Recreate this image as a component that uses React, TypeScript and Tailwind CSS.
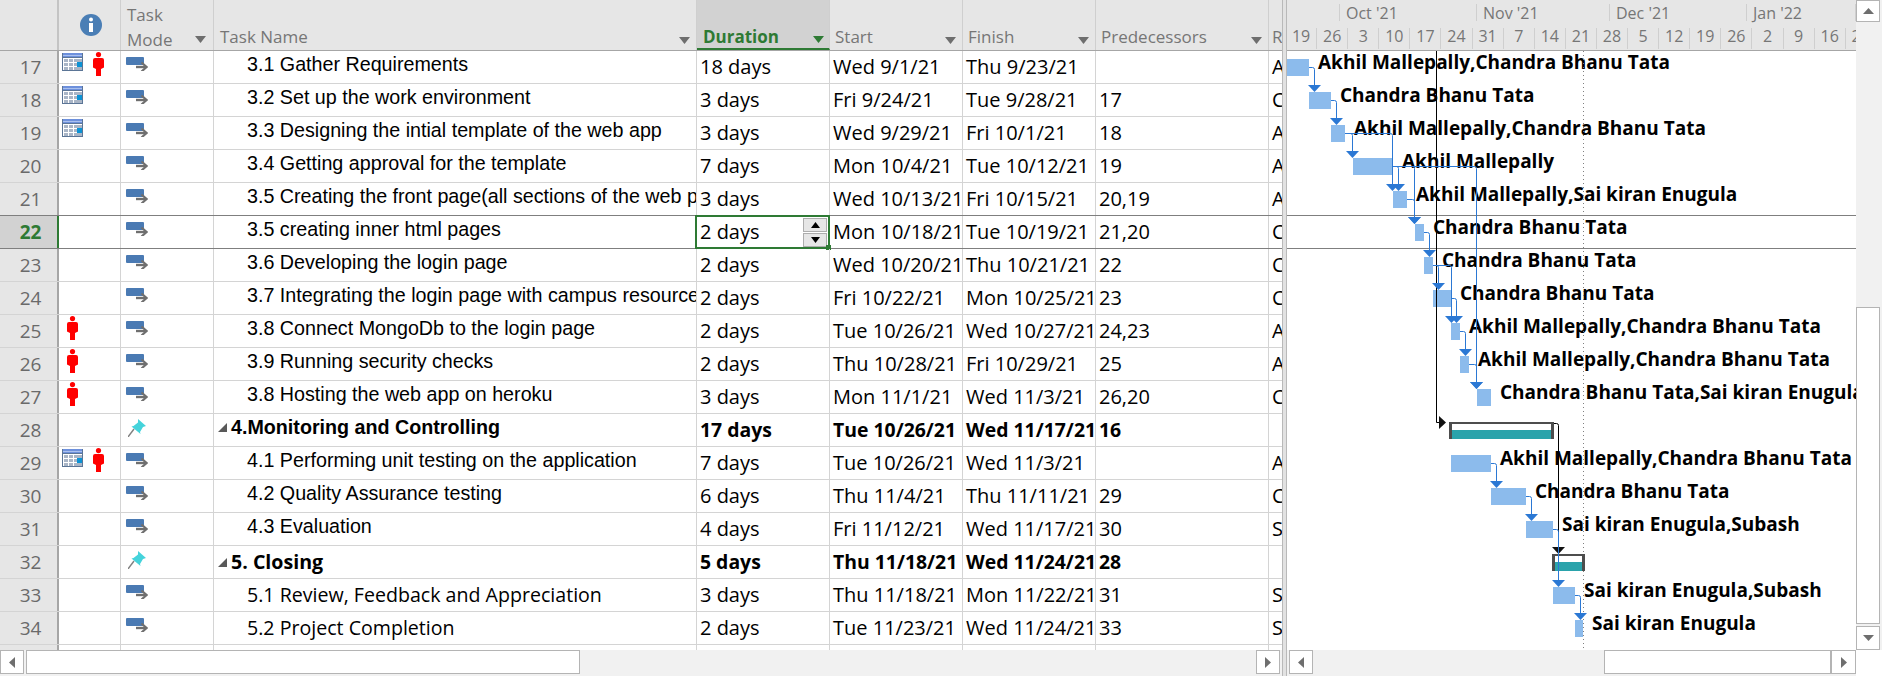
const tasks = [
  { id: 17, name: '3.1 Gather Requirements', dur: '18 days', start: 'Wed 9/1/21', finish: 'Thu 9/23/21', pred: '', res: 'Akhil Mallepally,Chandra Bhanu Tata', bar: [1287, 1309], cal: true, person: true },
  { id: 18, name: '3.2 Set up the work environment', dur: '3 days', start: 'Fri 9/24/21', finish: 'Tue 9/28/21', pred: '17', res: 'Chandra Bhanu Tata', bar: [1309, 1331], cal: true },
  { id: 19, name: '3.3 Designing the intial template of the web app', dur: '3 days', start: 'Wed 9/29/21', finish: 'Fri 10/1/21', pred: '18', res: 'Akhil Mallepally,Chandra Bhanu Tata', bar: [1331, 1345], cal: true },
  { id: 20, name: '3.4 Getting approval for the template', dur: '7 days', start: 'Mon 10/4/21', finish: 'Tue 10/12/21', pred: '19', res: 'Akhil Mallepally', bar: [1353, 1393] },
  { id: 21, name: '3.5 Creating the front page(all sections of the web pages)', dur: '3 days', start: 'Wed 10/13/21', finish: 'Fri 10/15/21', pred: '20,19', res: 'Akhil Mallepally,Sai kiran Enugula', bar: [1393, 1407] },
  { id: 22, name: '3.5 creating inner html pages', dur: '2 days', start: 'Mon 10/18/21', finish: 'Tue 10/19/21', pred: '21,20', res: 'Chandra Bhanu Tata', bar: [1415, 1424] },
  { id: 23, name: '3.6 Developing the login page', dur: '2 days', start: 'Wed 10/20/21', finish: 'Thu 10/21/21', pred: '22', res: 'Chandra Bhanu Tata', bar: [1424, 1433] },
  { id: 24, name: '3.7 Integrating the login page with campus resources', dur: '2 days', start: 'Fri 10/22/21', finish: 'Mon 10/25/21', pred: '23', res: 'Chandra Bhanu Tata', bar: [1433, 1451] },
  { id: 25, name: '3.8 Connect MongoDb to the login page', dur: '2 days', start: 'Tue 10/26/21', finish: 'Wed 10/27/21', pred: '24,23', res: 'Akhil Mallepally,Chandra Bhanu Tata', bar: [1451, 1460], person: true },
  { id: 26, name: '3.9 Running security checks', dur: '2 days', start: 'Thu 10/28/21', finish: 'Fri 10/29/21', pred: '25', res: 'Akhil Mallepally,Chandra Bhanu Tata', bar: [1460, 1469], person: true },
  { id: 27, name: '3.8 Hosting the web app on heroku', dur: '3 days', start: 'Mon 11/1/21', finish: 'Wed 11/3/21', pred: '26,20', res: 'Chandra Bhanu Tata,Sai kiran Enugula', bar: [1477, 1491], person: true },
  { id: 28, name: '4.Monitoring and Controlling', dur: '17 days', start: 'Tue 10/26/21', finish: 'Wed 11/17/21', pred: '16', res: '', bar: [1449, 1554], summary: true },
  { id: 29, name: '4.1 Performing unit testing on the application', dur: '7 days', start: 'Tue 10/26/21', finish: 'Wed 11/3/21', pred: '', res: 'Akhil Mallepally,Chandra Bhanu Tata', bar: [1451, 1491], cal: true, person: true },
  { id: 30, name: '4.2 Quality Assurance testing', dur: '6 days', start: 'Thu 11/4/21', finish: 'Thu 11/11/21', pred: '29', res: 'Chandra Bhanu Tata', bar: [1491, 1526] },
  { id: 31, name: '4.3 Evaluation', dur: '4 days', start: 'Fri 11/12/21', finish: 'Wed 11/17/21', pred: '30', res: 'Sai kiran Enugula,Subash', bar: [1526, 1553] },
  { id: 32, name: '5. Closing', dur: '5 days', start: 'Thu 11/18/21', finish: 'Wed 11/24/21', pred: '28', res: '', bar: [1552, 1585], summary: true },
  { id: 33, name: '5.1 Review, Feedback and Appreciation', dur: '3 days', start: 'Thu 11/18/21', finish: 'Mon 11/22/21', pred: '31', res: 'Sai kiran Enugula,Subash', bar: [1553, 1575] },
  { id: 34, name: '5.2 Project Completion', dur: '2 days', start: 'Tue 11/23/21', finish: 'Wed 11/24/21', pred: '33', res: 'Sai kiran Enugula', bar: [1575, 1583] },
];

// from x, y along to the column, then down to the arrow tip
const links = [
  [1309, 67.5, 1314.5, 92],
  [1331, 100.5, 1336.5, 125],
  [1345, 133.5, 1352.5, 158],
  [1345, 133.5, 1392.5, 191],
  [1393, 166.5, 1398.5, 191],
  [1393, 166.5, 1414.5, 224],
  [1393, 166.5, 1476.5, 389],
  [1407, 199.5, 1414.5, 224],
  [1424, 232.5, 1429.5, 257],
  [1433, 265.5, 1438.5, 290],
  [1433, 265.5, 1451.5, 323],
  [1451, 298.5, 1456.5, 323],
  [1460, 331.5, 1465.5, 356],
  [1469, 364.5, 1476.5, 389],
  [1491, 463.5, 1496.5, 488],
  [1526, 496.5, 1531.5, 521],
  [1553, 529.5, 1558.5, 587],
  [1575, 595.5, 1580.5, 620],
];

const weeks = ['19', '26', '3', '10', '17', '24', '31', '7', '14', '21', '28', '5', '12', '19', '26', '2', '9', '16', '23'];

const Caret = ({ color = '#6e6e6e' }: { color?: string }) => (
  <svg width="11" height="7" className="shrink-0">
    <polygon points="0,0 11,0 5.5,7" fill={color} />
  </svg>
);

const CalendarIcon = () => (
  <svg width="21" height="18" className="shrink-0">
    <rect width="21" height="18" fill="#5b7596" />
    <rect x="1" y="0" width="19" height="4" fill="#6d90dc" />
    <rect x="1" y="2" width="19" height="1" fill="#a9c0ee" />
    <rect x="1" y="5" width="19" height="12" fill="#ffffff" />
    {[2, 7, 12].map((x) =>
      [6, 10, 14].map((y) => <rect key={`${x}-${y}`} x={x} y={y} width="4" height="3" fill="#a9b5c6" />)
    )}
    <rect x="16" y="6" width="4" height="3" fill="#a9b5c6" />
    <rect x="16" y="14" width="4" height="3" fill="#a9b5c6" />
    <rect x="15" y="9" width="5" height="5" fill="#0b93d5" />
  </svg>
);

const PersonIcon = () => (
  <svg width="11" height="24" className="shrink-0">
    <circle cx="5.5" cy="2.6" r="2.6" fill="#ff0000" />
    <path d="M2 6 H9 Q11 6 11 8 V15.5 L8 17 V24 H3 V17 L0 15.5 V8 Q0 6 2 6 Z" fill="#ff0000" />
  </svg>
);

const ModeIcon = () => (
  <svg width="22" height="14" className="shrink-0">
    <rect x="0" y="0" width="18" height="8" rx="1" fill="#4a7ab3" />
    <path d="M10 10 H19" stroke="#6f6f6f" strokeWidth="2.4" />
    <path d="M15.5 5.5 L20.5 10 L15.5 14.5" stroke="#6f6f6f" strokeWidth="2.2" fill="none" />
  </svg>
);

const PinIcon = () => (
  <svg width="18" height="18" className="shrink-0">
    <path d="M0 18 L6 10" stroke="#808080" strokeWidth="1.4" />
    <path d="M10 0 L18 7 L15 8 L12 13 L12.5 15 L3.5 7.5 L5.5 7 L10 3.5 Z" fill="#45d3db" />
  </svg>
);

const InfoIcon = () => (
  <svg width="22" height="22">
    <circle cx="11" cy="11" r="11" fill="#4a7eb5" />
    <circle cx="11" cy="5.5" r="2" fill="#ffffff" />
    <rect x="9" y="9" width="4" height="9" fill="#ffffff" />
  </svg>
);

const ScrollButton = ({ dir, className }: { dir: 'left' | 'right' | 'up' | 'down'; className: string }) => {
  const points = {
    left: '7,0 7,11 1,5.5',
    right: '1,0 1,11 7,5.5',
    up: '0,7 11,7 5.5,1',
    down: '0,1 11,1 5.5,7',
  }[dir];
  const size = dir === 'left' || dir === 'right' ? { width: 8, height: 11 } : { width: 11, height: 8 };
  return (
    <div className={`flex items-center justify-center border border-[#b4b4b4] bg-white shrink-0 ${className}`}>
      <svg {...size}>
        <polygon points={points} fill="#6e6e6e" />
      </svg>
    </div>
  );
};

const HeaderCell = ({ children, className }: { children: React.ReactNode; className: string }) => (
  <div className={`flex items-end h-full border-r border-[#cfcfcf] overflow-hidden whitespace-nowrap ${className}`}>
    {children}
  </div>
);

const Row = ({ t }: { t: (typeof tasks)[number] }) => {
  const selected = t.id === 22;
  const lineColor = t.id === 21 || selected ? 'border-b-[#7f7f7f]' : 'border-b-[#d4d4d4]';
  const cell = `flex items-center h-full border-r border-r-[#d4d4d4] overflow-hidden whitespace-nowrap pl-[3px] shrink-0`;
  const weight = t.summary ? 'font-bold text-[19.4px]' : '';
  // rows up to 31 are in an Arial-like face sitting a little high in the cell
  const nameFont =
    t.id < 32 ? "font-['Liberation_Sans',sans-serif] text-[19.7px] pb-[5px]" : 'text-[19.6px]';
  return (
    <div className={`flex h-[33px] border-b text-[20px] text-black ${lineColor}`}>
      <div
        className={`flex items-center justify-center w-[59px] h-full shrink-0 border-r-2 pl-1 text-[19px] ${
          selected ? 'bg-[#d2d2d2] text-[#2e7a34] font-bold border-r-[#2e7a34]' : 'bg-[#e6e6e6] text-[#6a6a6a] border-r-[#a6a6a6]'
        }`}
      >
        {t.id}
      </div>
      <div className="flex items-start gap-[10px] w-[62px] h-full shrink-0 border-r border-r-[#d4d4d4] pl-[3px] pt-[1px]">
        {t.cal && <div className="w-[21px] shrink-0 pt-[1px]"><CalendarIcon /></div>}
        {t.person && <div className={t.cal ? '' : 'pl-[5px]'}><PersonIcon /></div>}
      </div>
      <div className="flex items-start w-[93px] h-full shrink-0 border-r border-r-[#d4d4d4] pl-[5px] pt-[6px]">
        {t.summary ? <div className="pl-[2px] -mt-[1px]"><PinIcon /></div> : <ModeIcon />}
      </div>
      <div
        className={`flex items-center w-[483px] h-full shrink-0 overflow-hidden whitespace-nowrap border-r ${
          selected ? 'border-r-2 border-r-[#2e7a34]' : 'border-r-[#d4d4d4]'
        } ${t.summary ? 'pl-[4px]' : 'pl-[33px]'} ${nameFont} ${t.summary ? 'font-bold' : ''}`}
      >
        {t.summary && (
          <svg width="9" height="9" className="mr-[4px] shrink-0">
            <polygon points="9,0 9,9 0,9" fill="#595959" />
          </svg>
        )}
        {t.name}
      </div>
      <div className={`${cell} w-[133px] relative overflow-visible ${weight}`}>
        {t.dur}
        {selected && (
          <div className="absolute -left-[2px] -top-[1px] w-[135px] h-[34px] border-2 border-[#2e7a34] flex flex-col items-end justify-center gap-[1px] pr-[1px]">
            {['0,6 9,6 4.5,0', '0,0 9,0 4.5,6'].map((p) => (
              <div key={p} className="flex items-center justify-center w-[24px] h-[14px] bg-[#e6e6e6] border border-[#adadad]">
                <svg width="9" height="6">
                  <polygon points={p} fill="#000000" />
                </svg>
              </div>
            ))}
            <div className="absolute -right-[3px] -bottom-[3px] w-[5px] h-[5px] bg-[#2e7a34]" />
          </div>
        )}
      </div>
      <div className={`${cell} w-[133px] ${weight}`}>{t.start}</div>
      <div className={`${cell} w-[133px] ${weight}`}>{t.finish}</div>
      <div className={`${cell} w-[173px] ${weight}`}>{t.pred}</div>
      <div className="flex items-center h-full flex-1 overflow-hidden whitespace-nowrap pl-[3px]">{t.res}</div>
    </div>
  );
};

const GanttChart = () => (
  <div className="relative h-[599px] overflow-hidden bg-white">
    {tasks.map((t, i) =>
      t.res ? (
        <span
          key={t.id}
          className="absolute h-[25px] leading-[25px] text-[19px] font-bold text-black whitespace-nowrap"
          style={{ left: t.bar[1] - 1287 + 9, top: i * 33 - 1 }}
        >
          {t.res}
        </span>
      ) : null
    )}
    <svg width="569" height="599" viewBox="1287 51 569 599" className="absolute left-0 top-0">
      <path d="M1287 215.5 H1856 M1287 248.5 H1856" stroke="#7f7f7f" />
      <path d="M1583.5 51 V650" stroke="#808080" strokeDasharray="1 3" />
      {tasks.map((t, i) => {
        const [x0, x1] = t.bar;
        const y = 59 + i * 33;
        return t.summary ? (
          <g key={t.id}>
            <rect x={x0} y={y} width={x1 - x0} height="17" fill="#4d4d4d" />
            <rect x={x0 + 3} y={y + 2} width={x1 - x0 - 6} height="6" fill="#ffffff" />
            <rect x={x0 + 3} y={y + 8} width={x1 - x0 - 6} height="9" fill="#2aa3ab" />
          </g>
        ) : (
          <rect key={t.id} x={x0} y={y} width={x1 - x0} height="17" fill="#8cbbec" />
        );
      })}
      <path d="M1436.5 51 V422.5 H1440" stroke="#000000" fill="none" />
      <polygon points="1439,416 1446,422.5 1439,429" fill="#111111" />
      <path d="M1554 423.5 H1556.5 Q1558.5 423.5 1558.5 425.5 V548" stroke="#000000" fill="none" />
      <polygon points="1552,547 1565,547 1558.5,554" fill="#111111" />
      {links.map(([x0, y, x, tip]) => (
        <g key={`${x0}-${x}-${tip}`}>
          <path d={`M${x0} ${y} H${x - 2} Q${x} ${y} ${x} ${y + 2} V${tip - 6}`} stroke="#2b78d4" fill="none" />
          <polygon points={`${x - 6.5},${tip - 7} ${x + 6.5},${tip - 7} ${x},${tip}`} fill="#2b78d4" />
        </g>
      ))}
    </svg>
  </div>
);

export default function App() {
  return (
    <div className="flex w-[1882px] h-[676px] overflow-hidden bg-white font-['Open_Sans','Liberation_Sans',sans-serif]">
      {/* Task table */}
      <div className="flex flex-col w-[1282px] shrink-0">
        <div className="flex h-[51px] border-b border-[#a6a6a6] bg-[#e6e6e6] text-[17px] leading-[25px] text-[#767676]">
          <div className="w-[59px] h-full shrink-0 border-r-2 border-[#c4c4c4]" />
          <div className="flex items-center justify-center w-[62px] h-full shrink-0 border-r border-[#cfcfcf] pl-[2px]">
            <InfoIcon />
          </div>
          <div className="flex flex-col w-[93px] h-full shrink-0 border-r border-[#cfcfcf] pl-[6px] pt-[2px]">
            <span>Task</span>
            <div className="flex items-center justify-between pr-[7px]">
              <span>Mode</span>
              <Caret />
            </div>
          </div>
          <HeaderCell className="w-[483px] shrink-0 justify-between pl-[6px] pr-[6px] pb-[1px]">
            <span className="leading-[24px]">Task Name</span>
            <div className="pb-[5px]"><Caret /></div>
          </HeaderCell>
          <HeaderCell className="w-[133px] shrink-0 justify-between bg-[#d2d2d2] border-b-2 border-b-[#2e7a34] pl-[6px] pr-[5px]">
            <span className="font-bold text-[#2e7a34] leading-[22px]">Duration</span>
            <div className="pb-[5px]"><Caret color="#2e7a34" /></div>
          </HeaderCell>
          <HeaderCell className="w-[133px] shrink-0 justify-between pl-[5px] pr-[6px] pb-[1px]">
            <span className="leading-[24px]">Start</span>
            <div className="pb-[5px]"><Caret /></div>
          </HeaderCell>
          <HeaderCell className="w-[133px] shrink-0 justify-between pl-[5px] pr-[6px] pb-[1px]">
            <span className="leading-[24px]">Finish</span>
            <div className="pb-[5px]"><Caret /></div>
          </HeaderCell>
          <HeaderCell className="w-[173px] shrink-0 justify-between pl-[5px] pr-[6px] pb-[1px]">
            <span className="leading-[24px]">Predecessors</span>
            <div className="pb-[5px]"><Caret /></div>
          </HeaderCell>
          <div className="flex items-end flex-1 overflow-hidden pl-[3px] pb-[1px] leading-[24px]">Resource</div>
        </div>
        <div className="h-[599px] overflow-hidden">
          {tasks.map((t) => (
            <Row key={t.id} t={t} />
          ))}
          <div className="flex h-[33px]">
            <div className="w-[59px] h-full bg-[#e6e6e6] border-r-2 border-r-[#a6a6a6]" />
            <div className="w-[62px] h-full border-r border-r-[#d4d4d4]" />
            <div className="w-[93px] h-full border-r border-r-[#d4d4d4]" />
            <div className="w-[483px] h-full border-r border-r-[#d4d4d4]" />
            <div className="w-[133px] h-full border-r border-r-[#d4d4d4]" />
            <div className="w-[133px] h-full border-r border-r-[#d4d4d4]" />
            <div className="w-[133px] h-full border-r border-r-[#d4d4d4]" />
            <div className="w-[173px] h-full border-r border-r-[#d4d4d4]" />
          </div>
        </div>
        <div className="flex h-[26px] bg-[#f1f1f1] pr-[2px]">
          <ScrollButton dir="left" className="w-[24px] h-[24px]" />
          <div className="flex-1 pl-[2px]">
            <div className="w-[554px] h-[24px] bg-white border border-[#b4b4b4]" />
          </div>
          <ScrollButton dir="right" className="w-[24px] h-[24px]" />
        </div>
      </div>

      {/* Splitter */}
      <div className="w-[5px] shrink-0 bg-[#e2e2e2] border-x border-[#b9b9b9]" />

      {/* Gantt pane */}
      <div className="flex flex-col w-[569px] shrink-0">
        <div className="h-[51px] border-b border-[#a6a6a6] bg-[#e6e6e6] overflow-hidden text-[16px] text-[#767676] whitespace-nowrap">
          <div className="flex items-center h-[25px]">
            <div className="w-[53px] h-[17px] border-r border-[#cfcfcf] shrink-0" />
            {[
              { label: "Oct '21", w: 'w-[137px]' },
              { label: "Nov '21", w: 'w-[133px]' },
              { label: "Dec '21", w: 'w-[137px]' },
              { label: "Jan '22", w: 'w-[109px]' },
            ].map((m) => (
              <div key={m.label} className={`flex items-center h-[17px] pl-[6px] border-r border-[#cfcfcf] shrink-0 ${m.w}`}>
                {m.label}
              </div>
            ))}
          </div>
          <div className="flex -ml-[1px] pt-[3px]">
            {weeks.map((w, i) => (
              <div key={i} className="flex items-center justify-center w-[31.1px] h-[21px] pb-[6px] border-r border-[#cfcfcf] shrink-0">
                {w}
              </div>
            ))}
          </div>
        </div>
        <GanttChart />
        <div className="flex h-[26px] bg-[#f1f1f1] pl-[2px]">
          <ScrollButton dir="left" className="w-[24px] h-[24px]" />
          <div className="flex flex-1 justify-end">
            <div className="w-[227px] h-[24px] bg-white border border-[#b4b4b4]" />
          </div>
          <ScrollButton dir="right" className="w-[25px] h-[24px]" />
        </div>
      </div>

      {/* Vertical scrollbar */}
      <div className="flex flex-col w-[26px] shrink-0 bg-[#f1f1f1]">
        <ScrollButton dir="up" className="w-[24px] h-[22px]" />
        <div className="h-[285px] shrink-0" />
        <div className="w-[24px] h-[317px] shrink-0 bg-white border border-[#b4b4b4]" />
        <div className="h-[2px] shrink-0" />
        <ScrollButton dir="down" className="w-[24px] h-[24px]" />
        <div className="flex-1 bg-white" />
      </div>
    </div>
  );
}
